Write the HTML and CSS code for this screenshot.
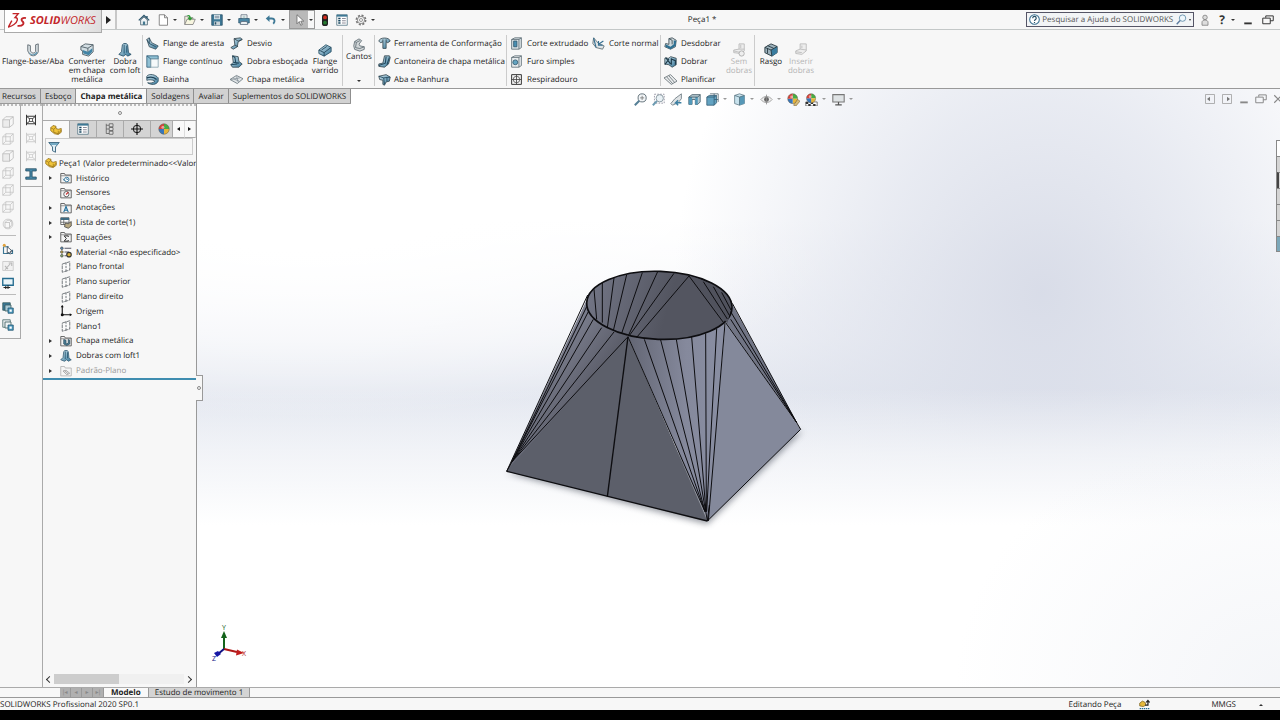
FILE: index.html
```html
<!DOCTYPE html>
<html lang="pt-BR">
<head>
<meta charset="utf-8">
<meta name="viewport" content="width=device-width, initial-scale=1">
<title>Peça1 - SOLIDWORKS</title>
<link rel="stylesheet" href="styles.css">
</head>
<body>
<svg class="defs" aria-hidden="true">
  <defs>
    <linearGradient id="steel" x1="0" y1="0" x2="1" y2="1"><stop offset="0" stop-color="#cfe3eb"/><stop offset="1" stop-color="#36789b"/></linearGradient>
    <symbol id="home" viewBox="0 0 16 16"><path d="M3.500 8v6.500h9V8L8 4z" fill="#eef3f6" stroke="#3c5766"/><path d="M1 8.500 8 2l7 6.500M12 2.500v3" fill="none" stroke="#2d566d" stroke-width="1.800"/><path d="M6.500 10h3v4.500h-3z" fill="#45788f"/></symbol>
    <symbol id="new" viewBox="0 0 16 16"><path d="M3 1h7l4 4v10H3z" fill="#fff" stroke="#666"/><path d="M10 1v4h4" fill="none" stroke="#666"/></symbol>
    <symbol id="open" viewBox="0 0 16 16"><path d="M1 14V3h4l1 2h6v2" fill="#efeede" stroke="#777"/><path d="M1 14 4 7h11l-3 7z" fill="#f7f5e0" stroke="#777"/><path d="M3 2c4-2 6 0 6 3h2.500L8 9 4.500 5H7C7 3 5 2 3 2z" fill="#2c9a34"/></symbol>
    <symbol id="save" viewBox="0 0 16 16"><path d="M1 1h14v14H1z" fill="#3d7895" stroke="#264f65"/><path d="M4 1h8v6H4z" fill="#dbe9ef"/><path d="M5 3h6M5 5h6" stroke="#678"/><path d="M4 10h8v5H4z" fill="#c9d3d8"/><path d="M6 11v3" stroke="#264f65" stroke-width="2"/></symbol>
    <symbol id="print" viewBox="0 0 16 16"><path d="M4 7V1h8v6" fill="#fff" stroke="#567"/><path d="M1 6h14v6H1z" fill="#4a86a4" stroke="#2d566d"/><path d="M4 10h8l1 4H3z" fill="#eaf0f3" stroke="#567"/><path d="M6 3h4M6 5h4" stroke="#8aa"/></symbol>
    <symbol id="undo" viewBox="0 0 16 16"><path d="M4 6h5c4 0 5 4 2 7" fill="none" stroke="#3d7895" stroke-width="2.500"/><path d="M1 6l5-4.500v9z" fill="#3d7895"/></symbol>
    <symbol id="cursor" viewBox="0 0 16 16"><path d="M4 1v12l3-3 2 5 2-1-2-4.500h4z" fill="#fff" stroke="#555" stroke-width=".9"/></symbol>
    <symbol id="traffic" viewBox="0 0 16 16"><rect x="4" y="0" width="8" height="16" rx="3.500" fill="#222"/><circle cx="8" cy="4.500" r="2.500" fill="#d32b1e"/><circle cx="8" cy="11.500" r="2.500" fill="#257a30"/></symbol>
    <symbol id="list" viewBox="0 0 16 16"><path d="M1 1h14v14H1z" fill="#fff" stroke="#496c7c"/><path d="M1 1h14v2.500H1z" fill="#3d7895"/><path d="M3 6h3M3 9h3M3 12h3" stroke="#16455e" stroke-width="2"/><path d="M8 6h5M8 9h5M8 12h5" stroke="#667"/></symbol>
    <symbol id="gear" viewBox="0 0 16 16"><circle cx="8" cy="8" r="6" fill="none" stroke="#777" stroke-width="2.500" stroke-dasharray="2.700 2"/><circle cx="8" cy="8" r="4.800" fill="#f4f4f4" stroke="#777"/><circle cx="8" cy="8" r="2" fill="#fff" stroke="#777"/></symbol>
    <symbol id="user" viewBox="0 0 16 16"><circle cx="8" cy="4.500" r="3" fill="#ddd" stroke="#777"/><path d="M4 15V11c0-4 8-4 8 0v4z" fill="#ddd" stroke="#777"/></symbol>
    <symbol id="lens" viewBox="0 0 16 16"><circle cx="9.500" cy="6" r="4.700" fill="#eef6fb" stroke="#5c8ba8" stroke-width="1.200"/><path d="M6 9.500 1 15" stroke="#5c7ba0" stroke-width="2"/></symbol>
    <symbol id="help" viewBox="0 0 16 16"><circle cx="8" cy="8" r="7" fill="#fff" stroke="#376f90" stroke-width="1.500"/><path d="M5.500 6c0-3.500 5-3 5 0 0 2-2.500 1.800-2.500 4M8 11.500V13" fill="none" stroke="#264f65" stroke-width="1.700"/></symbol>
    <symbol id="restore" viewBox="0 0 16 16"><path d="M5 5V2.500h10V9h-4" fill="none" stroke="currentColor" stroke-width="1.300"/><path d="M1 5.500h10V13H1z" fill="none" stroke="currentColor" stroke-width="1.300"/></symbol>
    <symbol id="min" viewBox="0 0 16 16"><path d="M3 12.500h10" stroke="currentColor" stroke-width="2.500"/></symbol>
    <symbol id="close" viewBox="0 0 16 16"><path d="M3 3l10 10M13 3 3 13" stroke="currentColor" stroke-width="1.500"/></symbol>
    <symbol id="paneL" viewBox="0 0 16 16"><path d="M2 2h12v12H2z" fill="none" stroke="#999"/><path d="M8 5v6L4 8z" fill="#777"/></symbol>
    <symbol id="paneR" viewBox="0 0 16 16"><path d="M2 2h12v12H2z" fill="none" stroke="#999"/><path d="M8 5v6l4-3z" fill="#777"/></symbol>

    <symbol id="base" viewBox="0 0 16 16"><path d="M2 2l3 1v5c0 3 4 5 6 2V2l3-1v9c-2 6-9 6-11 1L2 9z" fill="#dbe2e5" stroke="#5b676e"/><path d="M4 10c1 4 6 4 8 0l1 1c-2 4-7 4-9 1z" fill="#5a93ae"/></symbol>
    <symbol id="convert" viewBox="0 0 16 16"><path d="M1 4l5-3 9 1v8l-5 5-7-2V9l-2-1z" fill="#d3dee3" stroke="#4c5a62"/><path d="M3 8l6 2 5-4v4l-4 4-6-2z" fill="#4284a5"/><path d="M1 4l8 2 6-4M9 6v4" fill="none" stroke="#4c5a62"/></symbol>
    <symbol id="loft" viewBox="0 0 16 16"><path d="M5 2c1-2 5-2 6 0l1 9 3 2-4 2-2-2-3 2-5-2 3-3z" fill="url(#steel)" stroke="#2d566d"/><path d="M7 2v10M10 3v8" stroke="#1e506b"/></symbol>
    <symbol id="edge" viewBox="0 0 16 16"><path d="M1 3l3-2 3 6 8 4-3 4-8-3z" fill="url(#steel)" stroke="#3d515c"/><path d="M4 1v7l8 4M1 3l3 5" fill="none" stroke="#24485b"/></symbol>
    <symbol id="miter" viewBox="0 0 16 16"><path d="M1 1h14v4H6v10H1z" fill="#8fc0d4" stroke="#32607a"/><path d="M6 5h9v10H6z" fill="#f5f9fa" stroke="#87a2ae"/><path d="M1 1l5 4" stroke="#32607a"/></symbol>
    <symbol id="hem" viewBox="0 0 16 16"><path d="M1 4c3-4 11-2 14 2v4c-2 5-9 5-13 2 4 1 7 0 9-2-3-2-7-2-10-1z" fill="url(#steel)" stroke="#2d4c5c"/><path d="M1 6c5-2 9-1 12 2" fill="none" stroke="#1d4055" stroke-width="1.500"/></symbol>
    <symbol id="jog" viewBox="0 0 16 16"><path d="M5 2l8-1 2 2-5 3-1 6-5 3-3-2 5-3z" fill="url(#steel)" stroke="#34454e"/><path d="M5 2l5 3 5-2M6 10l4 2" fill="none" stroke="#34454e"/></symbol>
    <symbol id="sketchbend" viewBox="0 0 16 16"><path d="M3 1l7 1 1 6 4 3-4 4H3l-2-3 3-3z" fill="url(#steel)" stroke="#34454e"/><path d="M4 9l7 1M3 1l3 2 1 6M1 12l8-1" fill="none" stroke="#21485e" stroke-width="1.300"/></symbol>
    <symbol id="flatmetal" viewBox="0 0 16 16"><path d="M0 8l8-5 8 4-7 6z" fill="#e1e5e7" stroke="#68757c"/><path d="M4 7l7 3M8 4l2 7M1 8l11-2" fill="none" stroke="#87939a"/></symbol>
    <symbol id="swept" viewBox="0 0 16 16"><path d="M1 8l8-6 6 3v5l-8 5-6-3z" fill="url(#steel)" stroke="#295166"/><path d="M1 8l6 3 8-6M7 11v4M4 8l6-4" fill="none" stroke="#214458"/></symbol>
    <symbol id="corner" viewBox="0 0 16 16"><path d="M3 4l5-3 3 2-3 4 1 2 5 1v3l-5 2-6-2-1-4z" fill="#d2d7d9" stroke="#657178"/><path d="M3 4l2 1-1 6 5 1 5-2M5 5l4-2" fill="none" stroke="#657178"/></symbol>
    <symbol id="form" viewBox="0 0 16 16"><path d="M1 5c1-5 13-5 14 0l-3 2-2-1v8H6V6L3 7z" fill="url(#steel)" stroke="#34454e"/><path d="M6 6V3M10 6V3" stroke="#34454e"/></symbol>
    <symbol id="gusset" viewBox="0 0 16 16"><path d="M8 1h6l1 2-2 8-5 4-7-1v-3l5-1z" fill="url(#steel)" stroke="#34454e"/><path d="M10 2l-1 8-8 3M14 3l-3 9" fill="none" stroke="#23485c" stroke-width="1.300"/></symbol>
    <symbol id="tabslot" viewBox="0 0 16 16"><path d="M1 4l9-2 5 3-1 5-4 1-2 4-2-1V9L2 8z" fill="url(#steel)" stroke="#34454e"/><path d="M1 4l6 2 8-1M7 6l1 8M11 6v4" fill="none" stroke="#1c4258"/></symbol>
    <symbol id="cut" viewBox="0 0 16 16"><path d="M2 3l4-2h8v12l-3 2H2z" fill="#d7e0e4" stroke="#5b6b74"/><path d="M2 3h9v12M11 3l3-2" fill="none" stroke="#5b6b74"/><path d="M4.500 5h4v7h-4z" fill="#4990b3" stroke="#2d566d"/></symbol>
    <symbol id="hole" viewBox="0 0 16 16"><path d="M2 3l4-2h8v12l-3 2H2z" fill="#e8ecee" stroke="#5b6b74"/><path d="M2 3h9v12M11 3l3-2" fill="none" stroke="#5b6b74"/><circle cx="6.500" cy="9" r="3" fill="#63a4c1" stroke="#2d566d"/></symbol>
    <symbol id="vent" viewBox="0 0 16 16"><path d="M2 2h12v12H2z" fill="#f4f4f4" stroke="#333" stroke-width="1.200"/><circle cx="8" cy="8" r="4" fill="none" stroke="#555"/><path d="M8 2v12M2 8h12" stroke="#444"/></symbol>
    <symbol id="ncut" viewBox="0 0 16 16"><path d="M2 1l6 7 7 3-2 4-8-2-4-5z" fill="#e0e5e7" stroke="#59666d"/><path d="M2 1l3 12M14 5l-6 4M8 5v5h5" fill="none" stroke="#376f90" stroke-width="1.400"/></symbol>
    <symbol id="unfold" viewBox="0 0 16 16"><path d="M6 2l4-1 5 3-1 8-6 3-7-3 1-4 4 1z" fill="#ced9dd" stroke="#34454e"/><path d="M2 9l6 3 4-3V4l3 1-1 6-6 4-6-3z" fill="#2e7193"/><path d="M6 2l4 2v5" fill="none" stroke="#34454e"/></symbol>
    <symbol id="fold" viewBox="0 0 16 16"><path d="M1 4h5l2-2 7 2v8l-5 3-4-3-5-1z" fill="url(#steel)" stroke="#34454e"/><path d="M2 3l6 8M6 5l-5 7M9 5l5 2v5M9 4v8" fill="none" stroke="#1c3948" stroke-width="1.400"/></symbol>
    <symbol id="flatten" viewBox="0 0 16 16"><path d="M0 6l8-4 8 8-7 4z" fill="#eceeef" stroke="#616c72"/><path d="M3.500 5l7 8M6 3.500l7 8" stroke="#616c72"/></symbol>
    <symbol id="nobend" viewBox="0 0 16 16"><path d="M8 1h6v8l-4 3-8-1v-3l6-1z" fill="#ededed" stroke="#b9b9b9"/><path d="M8 7h6M10 2v4M2 9l8 2" fill="none" stroke="#bbb"/><circle cx="11" cy="12" r="3" fill="#eee" stroke="#aaa"/></symbol>
    <symbol id="insbend" viewBox="0 0 16 16"><path d="M7 1h7v8l-5 4-7-1V9l5-2z" fill="#ededed" stroke="#b9b9b9"/><path d="M7 7l7 1M9 3v3M2 10l7 1" fill="none" stroke="#bbb"/></symbol>
    <symbol id="rip" viewBox="0 0 16 16"><path d="M1 5l7-4 7 3v7l-6 4-8-4z" fill="#9db2bc" stroke="#26373f"/><path d="M8 8l7-4v7l-6 4z" fill="#397c9f"/><path d="M1 5l7 3 7-4M8 8l1 7M4 3l7 3M4 6v6" fill="none" stroke="#26373f"/></symbol>

    <symbol id="zoomfit" viewBox="0 0 16 16"><circle cx="10" cy="6" r="5" fill="#f2f5f7" stroke="#65737b" stroke-width="1.200"/><path d="M6.500 9.500 1 15" stroke="#557f96" stroke-width="2.500"/><path d="M7.500 6h5M10 3.500v5" stroke="#777"/></symbol>
    <symbol id="zoomarea" viewBox="0 0 16 16"><path d="M3 1.500h12v11H3z" fill="none" stroke="#889" stroke-dasharray="2 1.500"/><circle cx="9.500" cy="6.500" r="4.500" fill="#e9f1f5" stroke="#7b8b94"/><path d="M6 10l-5 5" stroke="#6b9ab1" stroke-width="2.500"/></symbol>
    <symbol id="prev" viewBox="0 0 16 16"><path d="M14 1l-8 6-5 6 2 2 7-3 4-5z" fill="#e0e4e6" stroke="#66757d"/><path d="M14 12H7l3-3M7 12l3 3" fill="none" stroke="#3c7fa1" stroke-width="1.800"/></symbol>
    <symbol id="section" viewBox="0 0 16 16"><path d="M1 5l4-3h10v9l-3 3H9V8H5v6H1z" fill="#b6c9d1" stroke="#435b67"/><path d="M1 5h4v9H1zM9 5h3v9H9z" fill="#5299ba"/><path d="M1 5h11l3-3" fill="none" stroke="#435b67"/></symbol>
    <symbol id="orient" viewBox="0 0 16 16"><path d="M5 1h10v10" fill="none" stroke="#5a6c75"/><path d="M1 5l3-2h9v9l-3 3H1z" fill="#63a3c2" stroke="#376078"/><path d="M1 5h9v10M10 5l3-2M10 1v4M10 8h5" fill="none" stroke="#376078"/></symbol>
    <symbol id="cube" viewBox="0 0 16 16"><path d="M2 3l6-2 6 2v10l-6 2-6-2z" fill="#c8e2ed" stroke="#647d89"/><path d="M8 5l6-2v10l-6 2z" fill="#5698b7"/><path d="M2 3l6 2 6-2M8 5v10" fill="none" stroke="#54707d"/></symbol>
    <symbol id="eye" viewBox="0 0 16 16"><path d="M1 8c4-5 10-5 14 0-4 5-10 5-14 0z" fill="#eee" stroke="#999"/><circle cx="8" cy="8" r="3" fill="#666"/><path d="M8 2v12" stroke="#888"/></symbol>
    <symbol id="ball" viewBox="0 0 16 16"><path d="M8 8V1a7 7 0 0 1 7 7z" fill="#47ad43"/><path d="M8 8h7a7 7 0 0 1-7 7z" fill="#e7b43a"/><path d="M8 8v7a7 7 0 0 1-7-7z" fill="#3777bd"/><path d="M8 8H1a7 7 0 0 1 7-7z" fill="#d84039"/><circle cx="8" cy="8" r="7" fill="none" stroke="#66604f" stroke-width=".7"/><circle cx="6.500" cy="5.500" r="2" fill="#fff" opacity=".5"/></symbol>
    <symbol id="appear" viewBox="0 0 16 16"><use href="#ball" width="14" height="14"/><path d="M8 15l5-7 3 2-5 6z" fill="#d8bc76" stroke="#725e36" stroke-width=".7"/></symbol>
    <symbol id="scene" viewBox="0 0 16 16"><path d="M1 11h14v5H1z" fill="#fff" stroke="#222" stroke-width=".7"/><path d="M1 11h3v2.500H1zM7 11h3v2.500H7zM4 13.500h3V16H4zM10 13.500h3V16h-3z" fill="#333"/><use href="#ball" x="1" y="0" width="13" height="13"/></symbol>
    <symbol id="monitor" viewBox="0 0 16 16"><path d="M1 2h14v9H1z" fill="#dfe3e5" stroke="#777" stroke-width="1.300"/><path d="M8 11v3M4 14.500h8" stroke="#555" stroke-width="1.500"/></symbol>

    <symbol id="wire" viewBox="0 0 16 16"><path d="M1 5h10v10H1zM5 1h10v10H5zM1 5l4-4M11 5l4-4M1 15l4-4M11 15l4-4" fill="none" stroke="#c2c2c2"/></symbol>
    <symbol id="wireb" viewBox="0 0 16 16"><path d="M1 5h9v10H1z" fill="#ececec" stroke="#b5b5b5"/><path d="M1 5l4-4h10v10l-5 4M10 5l5-4" fill="none" stroke="#b5b5b5"/></symbol>
    <symbol id="wirec" viewBox="0 0 16 16"><circle cx="8" cy="8" r="6.500" fill="none" stroke="#c2c2c2"/><path d="M4 6h6v7H4zM4 6l3-3h6v6l-3 4M10 6l3-3" fill="none" stroke="#bbb"/></symbol>
    <symbol id="sk" viewBox="0 0 16 16"><path d="M2 5v9h12V9M2 5h7" fill="none" stroke="#3d7895" stroke-width="1.500"/><path d="M7 5v9l2-2 2 3 1-1-1-3h3z" fill="#fff" stroke="#234"/><circle cx="3" cy="3" r="2" fill="#e2a23b"/></symbol>
    <symbol id="skoff" viewBox="0 0 16 16"><path d="M1 2h14v12H1z" fill="#f1f1f1" stroke="#c3c3c3"/><path d="M4 13l7-8M9 4h4v4M4 8l4 4" fill="none" stroke="#b8b8b8" stroke-width="1.500"/></symbol>
    <symbol id="rect" viewBox="0 0 16 16"><path d="M1 2h14v9H1z" fill="#eaf4f8" stroke="#246b8f" stroke-width="1.800"/><path d="M2 14h9M8 11v5M5 12v4" stroke="#222" stroke-width="1.300"/></symbol>
    <symbol id="copyb" viewBox="0 0 16 16"><path d="M1 1h10v10H1z" fill="#3b7898" stroke="#355"/><path d="M4 4h8v8H4z" fill="#a9c9d6" stroke="#355"/><path d="M8 8h7v7H8z" fill="#4d9abf" stroke="#1d536e"/><path d="M10 10h3v3h-3z" fill="#fff"/></symbol>
    <symbol id="copyc" viewBox="0 0 16 16"><path d="M1 1h10v10H1z" fill="#e3e8ea" stroke="#466"/><path d="M4 4h8v8H4z" fill="#eef2f4" stroke="#355"/><path d="M8 8h7v7H8z" fill="#4d9abf" stroke="#1d536e"/><path d="M10 10h3v3h-3z" fill="#fff"/></symbol>
    <symbol id="weld" viewBox="0 0 16 16"><path d="M2 1v14M14 1v14M2 3h12M2 13h12M2 3l12 10M14 3 2 13" fill="none" stroke="currentColor" stroke-width="1.300"/><path d="M6 6h4v4H6z" fill="#f7f7f7" stroke="currentColor"/></symbol>
    <symbol id="beam" viewBox="0 0 16 16"><path d="M1 1h14v3H9.500v8H15v3H1v-3h5.500V4H1z" fill="#4687a7" stroke="#20495e"/></symbol>

    <symbol id="part" viewBox="0 0 16 16"><path d="M1 5l3-3 4 1v3l3 1 4-1v5l-4 3-5-1-5-4z" fill="#f0c43a" stroke="#8c6a16"/><path d="M1 5l4 2 3-3M5 7v4l6 2 4-5M11 13V9" fill="none" stroke="#9a761c"/></symbol>
    <symbol id="config" viewBox="0 0 16 16"><path d="M3 1v13M3 3h4M3 8h4M3 14h4" fill="none" stroke="#555"/><path d="M7 1h5v4H7zM7 6h5v4H7zM7 11h5v4H7z" fill="#ddd" stroke="#555"/></symbol>
    <symbol id="target" viewBox="0 0 16 16"><circle cx="8" cy="8" r="5" fill="none" stroke="#111" stroke-width="1.300"/><path d="M8 0v16M0 8h16" stroke="#111" stroke-width="1.500"/></symbol>
    <symbol id="funnel" viewBox="0 0 16 16"><path d="M1 2h14l-5 6v7l-4-2V8z" fill="#dfeef5" stroke="#36617a" stroke-width="1.200"/><path d="M2 3h12l-1 2H4z" fill="#5293b2"/></symbol>
    <symbol id="folder" viewBox="0 0 16 16"><path d="M1 14.500V2h5l1 2h8v10.500z" fill="#f3f3f3" stroke="#5b5b5b" stroke-width="1.200"/><path d="M1 5h14" stroke="#777"/></symbol>
    <symbol id="hist" viewBox="0 0 16 16"><use href="#folder"/><circle cx="9" cy="10" r="3" fill="#fff" stroke="#2d7299" stroke-width="1.200"/><path d="M9 8v2h2M4 9l2 3" fill="none" stroke="#2d7299"/></symbol>
    <symbol id="sensor" viewBox="0 0 16 16"><use href="#folder"/><circle cx="8.500" cy="9.500" r="3.500" fill="#fff" stroke="#555" stroke-width="1.200"/><path d="M8 10l3-3" stroke="#c33" stroke-width="1.500"/></symbol>
    <symbol id="annot" viewBox="0 0 16 16"><use href="#folder"/><path d="M5 13.500 8 6l3 7.500M6 11h4" fill="none" stroke="#1f6e9b" stroke-width="1.500"/></symbol>
    <symbol id="cutlist" viewBox="0 0 16 16"><path d="M1 1h11v9H1z" fill="#fff" stroke="#444"/><path d="M1 1h11v3H1z" fill="#3c6c85"/><path d="M1 7h11M5 2v8" stroke="#555"/><path d="M7 8l4 1 4-3v6l-4 3-5-2z" fill="#b8a982" stroke="#3d3d3d"/></symbol>
    <symbol id="equat" viewBox="0 0 16 16"><use href="#folder"/><path d="M11 8V6.500H5.500L8.500 10l-3 3.500H11V12" fill="none" stroke="#333" stroke-width="1.300"/></symbol>
    <symbol id="material" viewBox="0 0 16 16"><path d="M6 3h9M6 8h6M6 13h3" stroke="#556" stroke-width="1.500"/><circle cx="2.500" cy="3" r="1.700" fill="#5c94c4" stroke="#444"/><circle cx="2.500" cy="8" r="1.700" fill="#d9b54a" stroke="#444"/><circle cx="2.500" cy="13" r="1.700" fill="#8bb573" stroke="#444"/><circle cx="12" cy="11.500" r="3" fill="#d8b23d" stroke="#333" stroke-width="1.500"/></symbol>
    <symbol id="plane" viewBox="0 0 16 16"><path d="M3 4l10-3v11L3 15z" fill="#fbfbfb" stroke="#4c5358" stroke-dasharray="5 1"/><path d="M8 2v12" stroke="#4c5358" stroke-dasharray="3 1.500"/></symbol>
    <symbol id="origin" viewBox="0 0 16 16"><path d="M3 1v12h12" fill="none" stroke="#111" stroke-width="1.500"/><path d="M3 0l2 3H1zM16 13l-3-2v4z" fill="#111"/><circle cx="3" cy="13" r="2" fill="#111"/></symbol>
    <symbol id="sheet" viewBox="0 0 16 16"><use href="#folder"/><path d="M5 6l3 1v5l3-1V6l2 1v5l-4 2-4-2z" fill="#4b809a" stroke="#2c4d5d"/></symbol>
    <symbol id="flatp" viewBox="0 0 16 16"><path d="M1 14.500V2h5l1 2h8v10.500z" fill="#f5f5f5" stroke="#aaa"/><path d="M4 8l4-1 5 4-4 2zM6 7.500l5 4.500" fill="#e8e8e8" stroke="#999"/></symbol>
    <symbol id="rebuild" viewBox="0 0 16 16"><path d="M1 6l4-3 4 2 1 4-4 2-5-1z" fill="#e5b93c" stroke="#765c18"/><path d="M9 9h4V3M10.500 5 13 2l2.500 3" fill="none" stroke="#222" stroke-width="1.800"/><path d="M1 14h14" stroke="#246b8f" stroke-width="2" stroke-dasharray="2 1"/></symbol>
  </defs>
</svg>

<div class="app">
  <header class="titlebar">
    <div class="brand">
      <svg class="brand-mark" viewBox="0 0 54 50" aria-hidden="true"><path d="M13 4h16l-9 11c11 0 7 14-3 20-5 4-11 6-16 7 4-7 7-13 10-18" fill="none" stroke="#c3272b" stroke-width="4"/><path d="M51 17c-9-3-15 3-11 8 8 6 4 15-13 14" fill="none" stroke="#c3272b" stroke-width="5"/></svg>
      <span class="brand-name"><b>SOLID</b>WORKS</span>
    </div>
    <button class="flyout" aria-label="Menu"></button>
    <div class="quick">
      <button aria-label="Início"><svg class="ic"><use href="#home"/></svg></button>
      <button class="dd" aria-label="Novo"><svg class="ic"><use href="#new"/></svg></button>
      <button class="dd" aria-label="Abrir"><svg class="ic"><use href="#open"/></svg></button>
      <button class="dd" aria-label="Salvar"><svg class="ic"><use href="#save"/></svg></button>
      <button class="dd" aria-label="Imprimir"><svg class="ic"><use href="#print"/></svg></button>
      <button class="dd" aria-label="Desfazer"><svg class="ic"><use href="#undo"/></svg></button>
      <button class="dd pressed" aria-label="Selecionar"><svg class="ic"><use href="#cursor"/></svg></button>
      <button aria-label="Reconstruir"><svg class="ic"><use href="#traffic"/></svg></button>
      <button aria-label="Propriedades"><svg class="ic"><use href="#list"/></svg></button>
      <button class="dd" aria-label="Opções"><svg class="ic"><use href="#gear"/></svg></button>
    </div>
    <h1 class="doc-title">Peça1 *</h1>
    <label class="search"><svg class="ic"><use href="#help"/></svg><input type="text" aria-label="Pesquisar" placeholder="Pesquisar a Ajuda do SOLIDWORKS"><svg class="ic"><use href="#lens"/></svg><i class="caret"></i></label>
    <div class="window-tools">
      <button aria-label="Usuário"><svg class="ic"><use href="#user"/></svg></button>
      <button class="dd ask" aria-label="Ajuda">?</button>
      <button aria-label="Minimizar"><svg class="ic"><use href="#min"/></svg></button>
      <button aria-label="Restaurar"><svg class="ic"><use href="#restore"/></svg></button>
    </div>
  </header>

  <div class="ribbon">
    <section class="group">
      <button class="big w66"><svg class="ic"><use href="#base"/></svg>Flange-base/Aba</button>
      <button class="big w42"><svg class="ic"><use href="#convert"/></svg>Converter<br>em chapa<br>metálica</button>
      <button class="big w34"><svg class="ic"><use href="#loft"/></svg>Dobra<br>com loft</button>
    </section>
    <section class="group">
      <div class="stack w84">
        <button><svg class="ic"><use href="#edge"/></svg>Flange de aresta</button>
        <button><svg class="ic"><use href="#miter"/></svg>Flange contínuo</button>
        <button><svg class="ic"><use href="#hem"/></svg>Bainha</button>
      </div>
      <div class="stack w80">
        <button><svg class="ic"><use href="#jog"/></svg>Desvio</button>
        <button><svg class="ic"><use href="#sketchbend"/></svg>Dobra esboçada</button>
        <button><svg class="ic"><use href="#flatmetal"/></svg>Chapa metálica</button>
      </div>
      <button class="big w34"><svg class="ic"><use href="#swept"/></svg>Flange<br>varrido</button>
    </section>
    <section class="group">
      <button class="big w30 up"><svg class="ic"><use href="#corner"/></svg>Cantos<i class="caret"></i></button>
    </section>
    <section class="group">
      <div class="stack w130">
        <button><svg class="ic"><use href="#form"/></svg>Ferramenta de Conformação</button>
        <button><svg class="ic"><use href="#gusset"/></svg>Cantoneira de chapa metálica</button>
        <button><svg class="ic"><use href="#tabslot"/></svg>Aba e Ranhura</button>
      </div>
    </section>
    <section class="group">
      <div class="stack w82">
        <button><svg class="ic"><use href="#cut"/></svg>Corte extrudado</button>
        <button><svg class="ic"><use href="#hole"/></svg>Furo simples</button>
        <button><svg class="ic"><use href="#vent"/></svg>Respiradouro</button>
      </div>
      <div class="stack w70">
        <button><svg class="ic"><use href="#ncut"/></svg>Corte normal</button>
      </div>
    </section>
    <section class="group">
      <div class="stack w62">
        <button><svg class="ic"><use href="#unfold"/></svg>Desdobrar</button>
        <button><svg class="ic"><use href="#fold"/></svg>Dobrar</button>
        <button><svg class="ic"><use href="#flatten"/></svg>Planificar</button>
      </div>
      <button class="big w30" disabled><svg class="ic"><use href="#nobend"/></svg>Sem<br>dobras</button>
    </section>
    <section class="group last">
      <button class="big w30"><svg class="ic"><use href="#rip"/></svg>Rasgo</button>
      <button class="big w30" disabled><svg class="ic"><use href="#insbend"/></svg>Inserir<br>dobras</button>
    </section>
  </div>

  <main class="workspace">
    <div class="left">
      <nav class="cmd-tabs">
        <button>Recursos</button><button>Esboço</button><button class="active">Chapa metálica</button><button>Soldagens</button><button>Avaliar</button><button>Suplementos do SOLIDWORKS</button>
      </nav>
      <div class="left-body">
        <div class="toolstrip strip-a">
          <button disabled aria-label="Vista frontal"><svg class="ic"><use href="#wireb"/></svg></button>
          <button disabled aria-label="Vista posterior"><svg class="ic"><use href="#wire"/></svg></button>
          <button disabled aria-label="Vista esquerda"><svg class="ic"><use href="#wireb"/></svg></button>
          <button disabled aria-label="Vista direita"><svg class="ic"><use href="#wire"/></svg></button>
          <button disabled aria-label="Vista superior"><svg class="ic"><use href="#wire"/></svg></button>
          <button disabled aria-label="Vista inferior"><svg class="ic"><use href="#wire"/></svg></button>
          <button disabled aria-label="Isométrica"><svg class="ic"><use href="#wirec"/></svg></button>
          <hr>
          <button aria-label="Esboço"><svg class="ic"><use href="#sk"/></svg></button>
          <button disabled aria-label="Reparar"><svg class="ic"><use href="#skoff"/></svg></button>
          <button aria-label="Retângulo"><svg class="ic"><use href="#rect"/></svg></button>
          <hr>
          <button aria-label="Bloco"><svg class="ic"><use href="#copyb"/></svg></button>
          <button aria-label="Editar bloco"><svg class="ic"><use href="#copyc"/></svg></button>
        </div>
        <div class="toolstrip strip-b">
          <button aria-label="Soldagem"><svg class="ic"><use href="#weld"/></svg></button>
          <button disabled aria-label="Aparar"><svg class="ic"><use href="#weld"/></svg></button>
          <button disabled aria-label="Extremidade"><svg class="ic"><use href="#weld"/></svg></button>
          <button aria-label="Membro estrutural"><svg class="ic"><use href="#beam"/></svg></button>
        </div>
        <aside class="panel">
          <div class="splitter"><i class="dot"></i></div>
          <div class="panel-tabs">
            <button class="active" aria-label="Árvore"><svg class="ic"><use href="#part"/></svg></button>
            <button aria-label="Propriedades"><svg class="ic"><use href="#list"/></svg></button>
            <button aria-label="Configurações"><svg class="ic"><use href="#config"/></svg></button>
            <button aria-label="DimXpert"><svg class="ic"><use href="#target"/></svg></button>
            <button class="cropped" aria-label="Aparência"><svg class="ic"><use href="#ball"/></svg></button>
            <button class="step back" aria-label="Anterior"></button>
            <button class="step next" aria-label="Próximo"></button>
          </div>
          <label class="filter"><svg class="ic"><use href="#funnel"/></svg><input type="text" aria-label="Filtro"></label>
          <ul class="tree">
            <li class="root"><svg class="ic"><use href="#part"/></svg>Peça1 (Valor predeterminado&lt;&lt;Valor</li>
            <li class="more"><svg class="ic"><use href="#hist"/></svg>Histórico</li>
            <li><svg class="ic"><use href="#sensor"/></svg>Sensores</li>
            <li class="more"><svg class="ic"><use href="#annot"/></svg>Anotações</li>
            <li class="more"><svg class="ic"><use href="#cutlist"/></svg>Lista de corte(1)</li>
            <li class="more"><svg class="ic"><use href="#equat"/></svg>Equações</li>
            <li><svg class="ic"><use href="#material"/></svg>Material &lt;não especificado&gt;</li>
            <li><svg class="ic"><use href="#plane"/></svg>Plano frontal</li>
            <li><svg class="ic"><use href="#plane"/></svg>Plano superior</li>
            <li><svg class="ic"><use href="#plane"/></svg>Plano direito</li>
            <li><svg class="ic"><use href="#origin"/></svg>Origem</li>
            <li><svg class="ic"><use href="#plane"/></svg>Plano1</li>
            <li class="more"><svg class="ic"><use href="#sheet"/></svg>Chapa metálica</li>
            <li class="more"><svg class="ic"><use href="#loft"/></svg>Dobras com loft1</li>
            <li class="more muted"><svg class="ic"><use href="#flatp"/></svg>Padrão-Plano</li>
          </ul>
          <div class="hscroll"><button class="arrow-l" aria-label="Rolar à esquerda"></button><div class="track"><i class="thumb"></i></div><button class="arrow-r" aria-label="Rolar à direita"></button></div>
          <button class="handle" aria-label="Recolher painel"><i class="dot"></i></button>
        </aside>
      </div>
    </div>

    <section class="view">
      <div class="view-head">
        <div class="view-tools">
          <button aria-label="Zoom para ajustar"><svg class="ic"><use href="#zoomfit"/></svg></button>
          <button aria-label="Zoom de área"><svg class="ic"><use href="#zoomarea"/></svg></button>
          <button aria-label="Vista anterior"><svg class="ic"><use href="#prev"/></svg></button>
          <button aria-label="Vista de seção"><svg class="ic"><use href="#section"/></svg></button>
          <button class="dd" aria-label="Orientação"><svg class="ic"><use href="#orient"/></svg></button>
          <button class="dd" aria-label="Estilo"><svg class="ic"><use href="#cube"/></svg></button>
          <button class="dd" aria-label="Ocultar"><svg class="ic"><use href="#eye"/></svg></button>
          <button aria-label="Aparência"><svg class="ic"><use href="#appear"/></svg></button>
          <button class="dd" aria-label="Cena"><svg class="ic"><use href="#scene"/></svg></button>
          <button class="dd" aria-label="Configurações de vista"><svg class="ic"><use href="#monitor"/></svg></button>
        </div>
        <div class="view-window">
          <button aria-label="Painel esquerdo"><svg class="ic"><use href="#paneL"/></svg></button>
          <button aria-label="Painel direito"><svg class="ic"><use href="#paneR"/></svg></button>
          <button aria-label="Minimizar vista"><svg class="ic"><use href="#min"/></svg></button>
          <button aria-label="Restaurar vista"><svg class="ic"><use href="#restore"/></svg></button>
          <button aria-label="Fechar vista"><svg class="ic"><use href="#close"/></svg></button>
        </div>
      </div>

      <svg class="model" viewBox="0 0 990 810" role="img" aria-label="Peça1">
        <defs>
          <filter id="soft" x="-10%" y="-10%" width="120%" height="120%"><feGaussianBlur stdDeviation="9"/></filter>
          <linearGradient id="mid" gradientUnits="userSpaceOnUse" x1="420" y1="300" x2="700" y2="300"><stop offset="0" stop-color="#646775"/><stop offset=".6" stop-color="#85899c"/><stop offset="1" stop-color="#898ea2"/></linearGradient>
          <linearGradient id="lf" gradientUnits="userSpaceOnUse" x1="200" y1="250" x2="330" y2="340"><stop offset="0" stop-color="#7d8090"/><stop offset="1" stop-color="#5c5e6a"/></linearGradient>
          <linearGradient id="inner" gradientUnits="userSpaceOnUse" x1="290" y1="100" x2="530" y2="160"><stop offset="0" stop-color="#737686"/><stop offset="1" stop-color="#535560"/></linearGradient>
        </defs>
        <path d="M50 640 652 793 938 514 700 560z" fill="#555a66" opacity=".6" filter="url(#soft)"/>
        <path d="M50 634 290 120 414 228 200 520z" fill="url(#lf)"/>
        <path d="M60 620 414 228 652 783 50 634z" fill="#5c5f6a"/>
        <path d="M414 228 530 200 707 186 655 783z" fill="url(#mid)"/>
        <path d="M707 186 932 508 652 783z" fill="#84899b"/>
        <path d="M707 186 725 130 925 496z" fill="#717585"/>
        <ellipse cx="508" cy="136" rx="218" ry="102" transform="rotate(2 508 136)" fill="url(#inner)" stroke="#0d0d10" stroke-width="5"/>
        <path d="M597 48 712 190 724 140C700 90 650 60 597 48z" fill="#50525d"/>
        <g fill="none" stroke="#0d0d10" stroke-width="3">
          <path d="M312 88l8 90M337 68v120M372 54l-20 150M410 44l-40 168M457 38l-62 182M503 35l-87 190M552 40 418 227M597 48 440 232M597 48 700 187M640 65l72 112M670 80l48 86M695 97l28 53"/>
          <path d="M50 634 293 105M66 605 290 140M66 605 295 155M66 605 310 178M66 605 335 203M66 605 372 216M66 605 414 230M50 634 66 605"/>
          <path d="M414 230 352 710" stroke-width="4"/>
          <path d="M414 230 645 755M463 238 645 755M512 240 645 755M559 238 647 755M605 231 648 755M647 220 649 755M680 207 650 755M705 190 655 783M645 740 652 783 658 735"/>
          <path d="M707 188 920 488M722 178 920 488M722 155 920 488M727 130 920 488 932 508"/>
          <path d="M50 634 652 783" stroke-width="4"/><path d="M652 783 932 508"/>
        </g>
      </svg>

      <svg class="triad" viewBox="0 0 40 40" role="img" aria-label="Eixos">
        <path d="M15 25V11" stroke="#14631b" stroke-width="2"/><path d="M15 7l3 7h-6z" fill="#14631b"/>
        <path d="M15 25l13 3" stroke="#b01818" stroke-width="2"/><path d="M35 29l-8 2.500 1-6z" fill="#c11d1d"/>
        <path d="M15 25l-6 5" stroke="#121284" stroke-width="2"/><path d="M5 29l4-2 3 3-4 3z" fill="#1717a5"/>
        <text x="13" y="6" fill="#14631b">Y</text><text x="33" y="32" fill="#b01818">X</text><text x="3" y="37" fill="#121284">Z</text>
      </svg>
      <div class="taskpane"><i></i><i></i><i></i><i></i><i></i><i></i><i></i></div>
    </section>
  </main>

  <nav class="doc-tabs">
    <div class="nav-set"><button aria-label="Primeiro">|◂</button><button aria-label="Anterior">◂</button><button aria-label="Próximo">▸</button><button aria-label="Último">▸|</button></div>
    <button class="doc-tab active">Modelo</button>
    <button class="doc-tab">Estudo de movimento 1</button>
  </nav>
  <footer class="status">
    <span class="version">SOLIDWORKS Profissional 2020 SP0.1</span>
    <span class="state">Editando Peça</span>
    <svg class="ic"><use href="#rebuild"/></svg>
    <button class="units">MMGS<i class="caret up"></i></button>
  </footer>
</div>
</body>
</html>
```

FILE: styles.css
```css
*, *::before, *::after { box-sizing: border-box; }

body {
  margin: 0;
  background: #000;
  color: #222;
  font: 8px/9px "Open Sans", "Noto Sans", sans-serif;
  text-rendering: geometricPrecision;
  overflow: hidden;
}

button, input { font: inherit; color: inherit; text-rendering: inherit; }
button { border: 0; padding: 0; background: none; white-space: nowrap; }
h1 { margin: 0; font: inherit; }

.defs { position: absolute; width: 0; height: 0; }
.ic { width: 12px; height: 12px; flex: none; display: block; }

.app {
  height: 100vh;
  padding: 10px 0;
  display: flex;
  flex-direction: column;
}

.caret, .dd::after {
  content: "";
  border: 2px solid transparent;
  border-top-color: #333;
  border-bottom: 0;
  flex: none;
}
.caret.up { border-top: 0; border-bottom: 2px solid #333; }
.dot { width: 4px; height: 4px; border: 1px solid #888; border-radius: 50%; }

/* title bar */
.titlebar {
  display: flex;
  align-items: center;
  height: 20px;
  background: #f7f7f7;
  border-bottom: 1px solid #c4c8c8;
  flex: none;
}
.brand {
  position: relative;
  z-index: 2;
  align-self: flex-start;
  display: flex;
  align-items: center;
  width: 98px;
  height: 23px;
  margin-left: 4px;
  padding: 0 3px;
  gap: 3px;
  border: 1px solid #aaa;
  border-top: 0;
  background: linear-gradient(100deg, #fff 40%, #ddd);
}
.brand-mark { width: 19px; height: 18px; flex: none; }
.brand-name { color: #c3272b; font: italic 11px/16px "Open Sans", "Noto Sans", sans-serif; }
.flyout {
  width: 15px;
  height: 19px;
  border-right: 2px solid #c8c8c8;
  display: flex;
  align-items: center;
  justify-content: center;
}
.flyout::after { content: ""; border: 4px solid transparent; border-left: 5px solid #222; border-right: 0; }
.quick { display: flex; margin-left: 20px; align-items: center; gap: 3px; }
.quick button { display: flex; align-items: center; height: 19px; }
.quick .dd { gap: 5px; padding: 0 2px 0 3px; }
.quick .dd::after, .window-tools .dd::after { border-width: 2px 2px 0; margin: 0 -1px; }
.quick button:not(.dd) { padding: 0 1px; }
.quick .pressed {
  width: 26px;
  padding: 0 3px 0 4px;
  gap: 4px;
  background: linear-gradient(90deg, #b9b9b9 18px, #f7f7f7 18px);
  border: 1px solid #999;
}
.doc-title { flex: 1; padding-left: 2px; text-align: center; }
.search {
  display: flex;
  align-items: center;
  gap: 2px;
  width: 168px;
  height: 15px;
  padding: 0 2px;
  border: 1px solid #556;
  background: #f2f4f6;
}
.search .ic { width: 11px; height: 11px; }
.search .caret { border-left-width: 1px; border-right-width: 1px; }
.search input { flex: 1; min-width: 0; border: 0; padding: 0; background: none; outline: 0; }
.search input::placeholder { color: #555; opacity: 1; }
.window-tools { display: flex; align-items: center; margin-left: 5px; gap: 8px; padding-right: 6px; color: #333; }
.window-tools .dd { display: flex; align-items: center; gap: 7px; }
.window-tools .ask { font-size: 12px; font-weight: 700; line-height: 12px; }

/* ribbon */
.ribbon {
  display: flex;
  height: 59px;
  padding-top: 3px;
  background: #f7f7f7;
  border-bottom: 1px solid #999;
  flex: none;
}
.group { display: flex; padding: 2px 0 0 1px; }
.group:not(.last)::after {
  content: "";
  width: 1px;
  margin: 0 0 2px;
  background: #ccc;
}
.group:first-child { padding-left: 0; }
.stack { display: grid; grid-template-rows: repeat(3, 1fr); }
.stack button { display: flex; align-items: center; gap: 4px; padding-left: 2px; text-align: left; }
.stack .ic { width: 13px; height: 13px; }
.big {
  display: flex;
  flex-direction: column;
  align-items: center;
  justify-content: flex-start;
  padding-top: 8px;
  text-align: center;
}
.big .ic { width: 14px; height: 14px; }
.big.up { padding-top: 3px; }
.big .caret { margin-top: auto; margin-bottom: 6px; }
.big:disabled { color: #b4b4b4; }
.w30 { width: 30px; }
.w34 { width: 34px; }
.w42 { width: 42px; }
.w62 { width: 62px; }
.w66 { width: 66px; }
.w70 { width: 70px; }
.w80 { width: 80px; }
.w82 { width: 82px; }
.w84 { width: 84px; }
.w130 { width: 130px; }
.w130 button { gap: 3px; }

/* workspace */
.workspace { display: flex; flex: 1; min-height: 0; }
.left { position: relative; z-index: 1; display: flex; flex-direction: column; width: 197px; background: #f7f7f7; flex: none; }
.cmd-tabs { display: flex; width: max-content; height: 15px; flex: none; border-bottom: 1px solid #999; }
.cmd-tabs button { padding: 0 4px; background: #d2d2d2; border-right: 1px solid #8f8f8f; }
.cmd-tabs button:first-child { padding-left: 2px; }
.cmd-tabs .active { background: #f9f9f9; font-weight: 700; }
.left-body { display: flex; flex: 1; min-height: 0; align-items: flex-start; }

.toolstrip { display: flex; flex-direction: column; border: 1px solid #aaa; border-top: 2px dotted #bbb; border-left: 0; }
.toolstrip button { display: flex; align-items: center; height: 18px; }
.strip-a { width: 21px; padding: 7px 0 5px; }
.strip-a button { padding-left: 2px; height: 17px; }
.strip-a hr { width: 16px; margin: 3px 0 4px; border: 0; border-top: 1px solid #bbb; }
.strip-b { width: 21px; padding: 5px 0 3px 4px; border-right: 0; color: #333; }
.strip-b button:disabled { color: #ccc; }

.panel {
  position: relative;
  display: flex;
  flex-direction: column;
  align-self: stretch;
  flex: 1;
  min-width: 0;
  border-left: 1px solid #aaa;
  border-right: 1px solid #999;
}
.splitter { display: flex; align-items: center; justify-content: center; height: 16px; border-top: 2px dotted #bbb; flex: none; }
.panel-tabs { display: flex; height: 18px; border-top: 1px solid #aaa; flex: none; }
.panel-tabs button { display: flex; align-items: center; justify-content: center; width: 27px; background: #d4d4d4; border-right: 1px solid #aaa; border-bottom: 1px solid #aaa; }
.panel-tabs .active { background: #f9f9f9; border-bottom: 0; }
.panel-tabs .cropped { width: 22px; justify-content: flex-end; padding-right: 2px; }
.panel-tabs .step { flex: 1; width: auto; background: #f9f9f9; border-right-color: #ddd; }
.step::after { content: ""; border: 2px solid transparent; }
.step.back::after { border-right: 3px solid #111; border-left: 0; }
.step.next::after { border-left: 3px solid #111; border-right: 0; }
.filter { display: flex; align-items: center; height: 17px; margin: 0 3px 0 2px; padding-left: 2px; border: 1px solid #ccc; flex: none; }
.filter input { flex: 1; min-width: 0; border: 0; padding: 0; outline: 0; background: none; }
.tree {
  display: grid;
  grid-auto-rows: 1fr;
  height: 225px;
  margin: 0;
  padding: 1px 0 0;
  list-style: none;
  border-bottom: 2px solid #3f8db0;
  flex: none;
}
.tree li { display: flex; align-items: center; gap: 4px; padding-left: 17px; white-space: nowrap; overflow: hidden; }
.tree .root { padding-left: 2px; gap: 2px; }
.tree .more { padding-left: 6px; }
.tree .more::before { content: ""; width: 3px; margin-right: 4px; border: 2px solid transparent; border-left: 3px solid #333; border-right: 0; }
.tree .muted { color: #999; }
.hscroll { display: flex; align-items: center; height: 10px; margin: auto 3px 3px 2px; flex: none; }
.hscroll button { display: flex; align-items: center; justify-content: center; width: 9px; height: 10px; }
.hscroll button::after { content: ""; width: 5px; height: 5px; border: solid #333; border-width: 1px 0 0 1px; rotate: -45deg; }
.hscroll .arrow-r::after { rotate: 135deg; }
.track { flex: 1; height: 10px; background: #f0f0f0; }
.thumb { display: block; width: 50%; height: 100%; background: #cdcdcd; }
.handle {
  position: absolute;
  right: -7px;
  top: 271px;
  display: flex;
  align-items: center;
  justify-content: center;
  width: 7px;
  height: 26px;
  background: #f7f7f7;
  border: 1px solid #999;
  border-left: 0;
}

/* graphics area */
.view {
  position: relative;
  flex: 1;
  min-width: 0;
  overflow: hidden;
  background:
    radial-gradient(ellipse 30% 45% at 100% 100%, rgba(240, 242, 246, .7), rgba(255, 255, 255, 0)),
    linear-gradient(rgba(255, 255, 255, 0) 50%, rgba(248, 249, 251, .7) 61%, #fff 73%),
    radial-gradient(ellipse 34% 70% at 78% 34%, rgba(215, 219, 231, .95) 0, rgba(220, 224, 235, .65) 45%, rgba(230, 233, 241, 0) 100%),
    radial-gradient(ellipse 55% 40% at 10% 15%, #fff 30%, rgba(255, 255, 255, 0) 100%),
    linear-gradient(rgba(255, 255, 255, 0) 22%, rgba(230, 233, 241, .6) 42%, rgba(226, 230, 239, .95) 52%),
    #fff;
}
.view-head { display: flex; align-items: center; height: 20px; }
.view-head::before { content: ""; flex: 1; }
.view-tools { display: flex; align-items: center; gap: 5px; padding-left: 6px; }
.view-tools .ic { width: 13px; height: 13px; }
.view-tools .dd { display: flex; align-items: center; gap: 4px; padding-right: 1px; }
.view-tools .dd::after { border-top-color: #999; }
.view-window { display: flex; flex: 1; justify-content: flex-end; gap: 5px; color: #888; margin-right: -4px; }
.model { position: absolute; left: 293px; top: 171px; width: 330px; height: 270px; }
.triad { position: absolute; left: 12px; bottom: 23px; width: 40px; height: 40px; overflow: visible; font-size: 7px; }
.taskpane { position: absolute; right: 0; top: 51px; display: grid; grid-auto-rows: 16px; width: 4px; border-left: 1px solid #888; }
.taskpane i { background: #d4d4d4; border-top: 1px solid #888; }
.taskpane i:first-child { background: #fff; }
.taskpane i:nth-child(3) { border-left: 2px solid #444; }
.taskpane i:last-child { background: #7ba7b9; border-bottom: 1px solid #888; }

/* bottom bars */
.doc-tabs { display: flex; height: 11px; padding-left: 42px; background: #f7f7f7; border-top: 1px solid #aaa; border-bottom: 1px solid #999; flex: none; }
.nav-set { display: flex; width: 44px; margin-left: 18px; background: #b0b0b0; }
.nav-set button { flex: 1; border-right: 1px solid #999; color: #888; font: 6px/8px "DejaVu Sans", sans-serif; }
.doc-tab { padding: 0 6px; line-height: 9px; background: #d4d4d4; border-right: 1px solid #999; }
.doc-tab.active { padding: 0 7px; background: #f9f9f9; font-weight: 700; }
.status { display: flex; align-items: center; height: 12px; padding-top: 1px; background: #f7f7f7; flex: none; }
.version { flex: 1; }
.state { margin-right: 18px; }
.status .ic { width: 11px; height: 11px; }
.units { display: flex; align-items: center; gap: 23px; margin: 0 17px 0 61px; }
```
